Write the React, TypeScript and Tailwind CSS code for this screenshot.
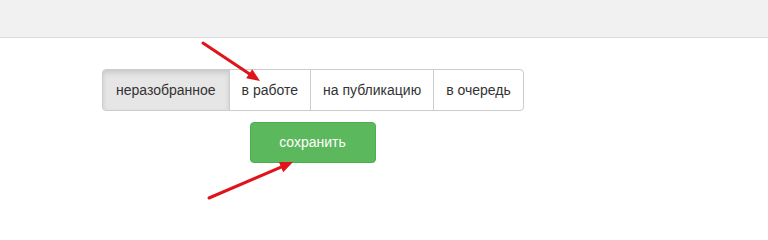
import React from "react";

const tabs = ["неразобранное", "в работе", "на публикацию", "в очередь"];

function Arrow({ x1, y1, x2, y2 }: { x1: number; y1: number; x2: number; y2: number }) {
  const a = Math.atan2(y2 - y1, x2 - x1);
  const len = 13;
  const w = 5.5;
  const bx = x2 - len * Math.cos(a);
  const by = y2 - len * Math.sin(a);
  const px = -Math.sin(a) * w;
  const py = Math.cos(a) * w;
  return (
    <>
      <line x1={x1} y1={y1} x2={bx} y2={by} stroke="#e0131b" strokeWidth={3} strokeLinecap="round" />
      <polygon points={`${x2},${y2} ${bx + px},${by + py} ${bx - px},${by - py}`} fill="#e0131b" />
    </>
  );
}

export default function App() {
  const active = 0;
  return (
    <div className="relative w-[768px] h-[240px] bg-white overflow-hidden font-['Liberation_Sans',Arial,sans-serif] text-[14px] text-[#333]">
      <div className="h-[38px] bg-[#f1f1f1] border-b border-[#dddddd]" />

      <div className="pl-[102px] pt-[31px] w-[523px] flex flex-col items-center">
        <div className="flex self-start whitespace-nowrap">
          {tabs.map((t, i) => (
            <button
              key={t}
              className={`shrink-0 h-[42px] border border-[#cccccc] leading-5 ${i === 0 ? "px-[13px]" : "px-3 -ml-px"} ${
                i === 0 ? "rounded-l" : ""
              } ${i === tabs.length - 1 ? "rounded-r" : ""} ${
                i === active ? "bg-[#e6e6e6] border-[#adadad] shadow-[inset_0_3px_5px_rgba(0,0,0,0.125)]" : "bg-white"
              }`}
            >
              {t}
            </button>
          ))}
        </div>
        <button className="mt-[11px] w-[126px] h-[41px] rounded bg-[#5cb85c] border border-[#4cae4c] text-white">
          сохранить
        </button>
      </div>

      <svg className="absolute inset-0 pointer-events-none" width={768} height={240}>
        <Arrow x1={203} y1={43} x2={260} y2={81} />
        <Arrow x1={209} y1={198} x2={293} y2={162} />
      </svg>
    </div>
  );
}
